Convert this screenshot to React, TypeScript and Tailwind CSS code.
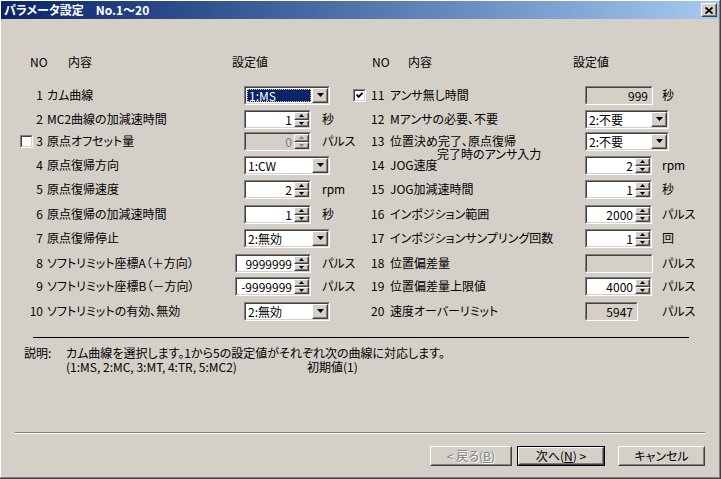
import React from "react";

const FONT =
  "font-['Noto_Sans_CJK_JP','Noto_Sans_CJK_SC',sans-serif] [font-feature-settings:'palt'] text-[12px] leading-[14px] text-black";

function Sunken({
  className = "",
  inner = "bg-white",
  children,
}: {
  className?: string;
  inner?: string;
  children?: React.ReactNode;
}) {
  return (
    <div
      className={`shrink-0 border border-t-[#808080] border-l-[#808080] border-r-white border-b-white ${className}`}
    >
      <div
        className={`h-full w-full border border-t-[#404040] border-l-[#404040] border-r-[#d4d0c8] border-b-[#d4d0c8] ${inner}`}
      >
        {children}
      </div>
    </div>
  );
}

function Raised({
  className = "",
  children,
}: {
  className?: string;
  children?: React.ReactNode;
}) {
  return (
    <div
      className={`shrink-0 bg-[#d4d0c8] border border-t-white border-l-white border-r-[#404040] border-b-[#404040] ${className}`}
    >
      <div className="h-full w-full border border-t-[#d4d0c8] border-l-[#d4d0c8] border-r-[#808080] border-b-[#808080] flex items-center justify-center">
        {children}
      </div>
    </div>
  );
}

function Checkbox({ checked }: { checked?: boolean }) {
  return (
    <Sunken className="w-[13px] h-[13px]" inner="bg-white flex items-center justify-center">
      {checked && (
        <svg width="7" height="7" viewBox="0 0 7 7">
          <path d="M0.5 2.5 L2.5 4.8 L6.5 0.8" stroke="#000" strokeWidth="1.9" fill="none" />
        </svg>
      )}
    </Sunken>
  );
}

function Combo({ w, value, selected }: { w: string; value: string; selected?: boolean }) {
  return (
    <Sunken className={`${w} h-[19px]`} inner="bg-white">
      <div className="flex h-full">
        <div className="flex-1 flex items-center pl-[1px] pr-[1px] min-w-0">
          {selected ? (
            <div className="flex-1 h-[13px] bg-[#0a246a] text-white leading-[11px] pl-[1px] border border-dotted border-[#c8c8a0] whitespace-nowrap">
              {value}
            </div>
          ) : (
            <span className="pl-[1px] leading-[15px] whitespace-nowrap">{value}</span>
          )}
        </div>
        <Raised className="w-[16px] h-full">
          <svg width="7" height="4" viewBox="0 0 7 4">
            <path d="M0 0 H7 L3.5 4 Z" fill="#000" />
          </svg>
        </Raised>
      </div>
    </Sunken>
  );
}

function Spin({ w, value, disabled }: { w: string; value: string; disabled?: boolean }) {
  const tri = disabled ? "#808080" : "#000";
  return (
    <Sunken className={`${w} h-[19px]`} inner={disabled ? "bg-[#d4d0c8]" : "bg-white"}>
      <div className="flex h-full">
        <div
          className={`flex-1 text-right pr-[2px] leading-[15px] whitespace-nowrap ${
            disabled ? "text-[#808080]" : ""
          }`}
        >
          {value}
        </div>
        <div className="w-[15px] flex flex-col">
          <Raised className="h-[8px] w-full">
            <svg width="5" height="3" viewBox="0 0 5 3">
              <path d="M2.5 0 L5 3 H0 Z" fill={tri} />
            </svg>
          </Raised>
          <Raised className="h-[7px] w-full">
            <svg width="5" height="3" viewBox="0 0 5 3">
              <path d="M0 0 H5 L2.5 3 Z" fill={tri} />
            </svg>
          </Raised>
        </div>
      </div>
    </Sunken>
  );
}

function ReadOnly({ w, value }: { w: string; value: string }) {
  return (
    <Sunken className={`${w} h-[19px]`} inner="bg-[#d4d0c8]">
      <div className="text-right pr-[3px] leading-[15px]">{value}</div>
    </Sunken>
  );
}

type Ctrl =
  | { t: "combo"; v: string; sel?: boolean; w: string }
  | { t: "spin"; v: string; w: string; dis?: boolean }
  | { t: "ro"; v: string; w: string };

function Control({ c }: { c: Ctrl }) {
  if (c.t === "combo") return <Combo w={c.w} value={c.v} selected={c.sel} />;
  if (c.t === "spin") return <Spin w={c.w} value={c.v} disabled={c.dis} />;
  return <ReadOnly w={c.w} value={c.v} />;
}

type Side = {
  num: string;
  label: string;
  label2?: string;
  check?: boolean;
  checked?: boolean;
  ctrl: Ctrl;
  unit?: string;
  labelW?: string;
  slotW?: string;
};

const rows: { mt: string; l: Side; r: Side }[] = [
  {
    mt: "",
    l: { num: "1", label: "カム曲線", ctrl: { t: "combo", v: "1:MS", sel: true, w: "w-[86px]" } },
    r: { num: "11", label: "アンサ無し時間", check: true, checked: true, ctrl: { t: "ro", v: "999", w: "w-[68px]" }, unit: "秒" },
  },
  {
    mt: "mt-[2px]",
    l: { num: "2", label: "MC2曲線の加減速時間", ctrl: { t: "spin", v: "1", w: "w-[67px]" }, unit: "秒" },
    r: { num: "12", label: "Mアンサの必要、不要", ctrl: { t: "combo", v: "2:不要", w: "w-[84px]" } },
  },
  {
    mt: "",
    l: { num: "3", label: "原点オフセット量", check: true, ctrl: { t: "spin", v: "0", w: "w-[67px]", dis: true }, unit: "パルス" },
    r: { num: "13", label: "位置決め完了、原点復帰", label2: "完了時のアンサ入力", ctrl: { t: "combo", v: "2:不要", w: "w-[84px]" } },
  },
  {
    mt: "mt-[2px]",
    l: { num: "4", label: "原点復帰方向", ctrl: { t: "combo", v: "1:CW", w: "w-[86px]" } },
    r: { num: "14", label: "JOG速度", ctrl: { t: "spin", v: "2", w: "w-[67px]" }, unit: "rpm" },
  },
  {
    mt: "mt-[2px]",
    l: { num: "5", label: "原点復帰速度", ctrl: { t: "spin", v: "2", w: "w-[67px]" }, unit: "rpm" },
    r: { num: "15", label: "JOG加減速時間", ctrl: { t: "spin", v: "1", w: "w-[67px]" }, unit: "秒" },
  },
  {
    mt: "mt-[3px]",
    l: { num: "6", label: "原点復帰の加減速時間", ctrl: { t: "spin", v: "1", w: "w-[67px]" }, unit: "秒" },
    r: { num: "16", label: "インポジション範囲", ctrl: { t: "spin", v: "2000", w: "w-[67px]" }, unit: "パルス" },
  },
  {
    mt: "mt-[2px]",
    l: { num: "7", label: "原点復帰停止", ctrl: { t: "combo", v: "2:無効", w: "w-[86px]" } },
    r: { num: "17", label: "インポジションサンプリング回数", ctrl: { t: "spin", v: "1", w: "w-[67px]" }, unit: "回" },
  },
  {
    mt: "mt-[3px]",
    l: {
      num: "8",
      label: "ソフトリミット座標A（＋方向）",
      ctrl: { t: "spin", v: "9999999", w: "w-[76px]" },
      unit: "パルス",
      labelW: "w-[188px]",
      slotW: "w-[87px]",
    },
    r: { num: "18", label: "位置偏差量", ctrl: { t: "ro", v: "", w: "w-[68px]" }, unit: "パルス" },
  },
  {
    mt: "mt-[1px]",
    l: {
      num: "9",
      label: "ソフトリミット座標B（－方向）",
      ctrl: { t: "spin", v: "-9999999", w: "w-[76px]" },
      unit: "パルス",
      labelW: "w-[188px]",
      slotW: "w-[87px]",
    },
    r: { num: "19", label: "位置偏差量上限値", ctrl: { t: "spin", v: "4000", w: "w-[67px]" }, unit: "パルス" },
  },
  {
    mt: "mt-[3px]",
    l: { num: "10", label: "ソフトリミットの有効、無効", ctrl: { t: "combo", v: "2:無効", w: "w-[86px]" } },
    r: { num: "20", label: "速度オーバーリミット", ctrl: { t: "ro", v: "5947", w: "w-[53px]" }, unit: "パルス" },
  },
];

function LeftSide({ s }: { s: Side }) {
  return (
    <div className="w-[350px] shrink-0 flex items-center h-full">
      <div className="w-[19px] shrink-0" />
      <div className="w-[23px] shrink-0 flex items-center">
        {s.check && <Checkbox checked={s.checked} />}
        <span className="ml-auto">{s.num}</span>
      </div>
      <div className={`${s.labelW ?? "w-[197px]"} shrink-0 ml-[4px] whitespace-nowrap`}>{s.label}</div>
      <div className={`${s.slotW ?? "w-[78px]"} shrink-0 flex`}>
        <Control c={s.ctrl} />
      </div>
      {s.unit && <div className="whitespace-nowrap">{s.unit}</div>}
    </div>
  );
}

function RightSide({ s }: { s: Side }) {
  return (
    <div className="flex items-center h-full">
      <div className="w-[2px] shrink-0" />
      <div className="w-[13px] shrink-0 flex">{s.check && <Checkbox checked={s.checked} />}</div>
      <div className="w-[5px] shrink-0" />
      <div className="w-[15px] shrink-0 whitespace-nowrap">{s.num}</div>
      <div className="w-[195px] shrink-0 ml-[4px] whitespace-nowrap">
        {s.label2 ? (
          <div className="flex flex-col h-[22px] pt-[4px]">
            <div className="leading-[13px]">{s.label}</div>
            <div className="leading-[12px] mt-[1px] ml-[47px]">{s.label2}</div>
          </div>
        ) : (
          s.label
        )}
      </div>
      <div className="w-[77px] shrink-0 flex">
        <Control c={s.ctrl} />
      </div>
      {s.unit && <div className="whitespace-nowrap">{s.unit}</div>}
    </div>
  );
}

function Button({
  children,
  w,
  def,
}: {
  children: React.ReactNode;
  w: string;
  def?: boolean;
}) {
  if (def) {
    return (
      <div className={`${w} h-[20px] shrink-0 border border-black`}>
        <Raised className="w-full h-full">{children}</Raised>
      </div>
    );
  }
  return <Raised className={`${w} h-[20px]`}>{children}</Raised>;
}

export default function App() {
  return (
    <div className={`w-[721px] h-[479px] overflow-hidden bg-[#d4d0c8] border-r border-b border-r-[#404040] border-b-[#404040] ${FONT}`}>
      <div className="h-full w-full flex flex-col border border-t-white border-l-white border-r-[#808080] border-b-[#808080]">
        {/* Title bar */}
        <div className="h-[18px] shrink-0 flex items-center bg-linear-to-r from-[#0a246a] to-[#a6caf0]">
          <div className="ml-[3px] text-white font-bold whitespace-nowrap">パラメータ設定　No.1～20</div>
          <Raised className="ml-auto mr-[2px] w-[16px] h-[14px]">
            <svg width="8" height="7" viewBox="0 0 8 7">
              <path d="M0.5 0.5 L7.5 6.5 M7.5 0.5 L0.5 6.5" stroke="#000" strokeWidth="1.7" />
            </svg>
          </Raised>
        </div>

        {/* Header */}
        <div className="mt-[35px] h-[16px] flex items-center whitespace-nowrap">
          <div className="w-[29px] shrink-0" />
          <div className="w-[38px] shrink-0">NO</div>
          <div className="w-[164px] shrink-0">内容</div>
          <div className="w-[140px] shrink-0">設定値</div>
          <div className="w-[36px] shrink-0">NO</div>
          <div className="w-[165px] shrink-0">内容</div>
          <div>設定値</div>
        </div>

        {/* Rows */}
        <div className="mt-[14px] flex flex-col">
          {rows.map((row, i) => (
            <div key={i} className={`h-[22px] flex items-center ${row.mt}`}>
              <LeftSide s={row.l} />
              <RightSide s={row.r} />
            </div>
          ))}
        </div>

        {/* Separator */}
        <div className="mt-[15px] ml-[32px] w-[656px] h-[1px] bg-black shrink-0" />

        {/* Description */}
        <div className="mt-[8px] flex whitespace-nowrap">
          <div className="ml-[23px] w-[42px] shrink-0">説明:</div>
          <div className="flex flex-col">
            <div className="h-[14px]">カム曲線を選択します。1から5の設定値がそれぞれ次の曲線に対応します。</div>
            <div className="flex h-[14px]">
              <span className="w-[241px] shrink-0">(1:MS, 2:MC, 3:MT, 4:TR, 5:MC2)</span>
              <span>初期値(1)</span>
            </div>
          </div>
        </div>

        {/* Bottom separator */}
        <div className="mt-[58px] ml-[14px] w-[690px] h-[2px] shrink-0 border-t border-t-[#808080] border-b border-b-white" />

        {/* Buttons */}
        <div className="mt-[12px] flex justify-end pr-[14px] whitespace-nowrap">
          <Button w="w-[82px]">
            <span className="text-[#808080] [text-shadow:1px_1px_0_#ffffff]">
              &lt; 戻る(<span className="underline">B</span>)
            </span>
          </Button>
          <div className="w-[5px] shrink-0" />
          <Button w="w-[88px]" def>
            <span>
              次へ(<span className="underline">N</span>) &gt;
            </span>
          </Button>
          <div className="w-[13px] shrink-0" />
          <Button w="w-[87px]">キャンセル</Button>
        </div>
      </div>
    </div>
  );
}
